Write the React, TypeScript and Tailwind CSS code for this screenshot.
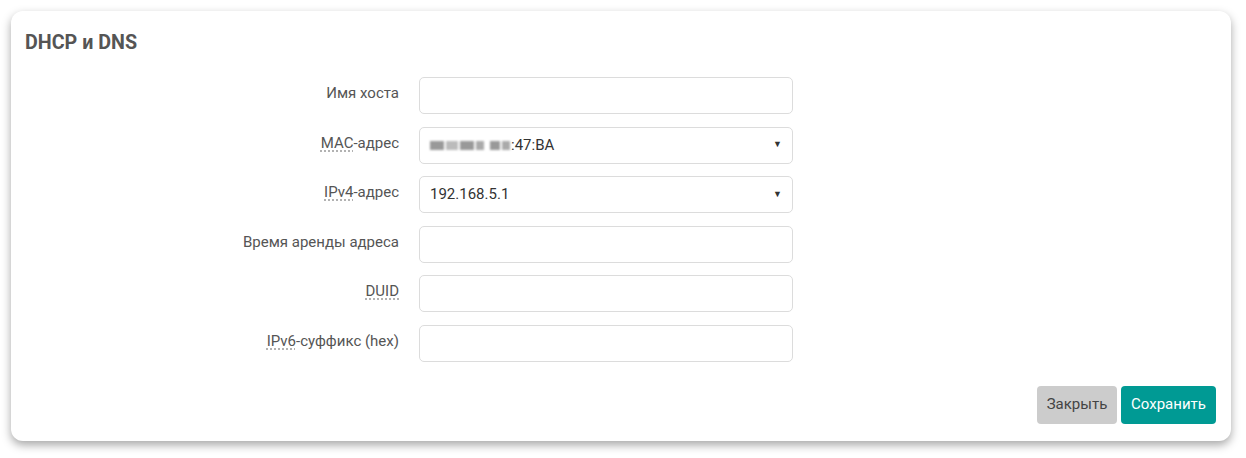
import type { ReactNode } from 'react'

function Abbr({ children }: { children: ReactNode }) {
  return (
    <span className="underline decoration-dotted decoration-[#999] underline-offset-[3px]">
      {children}
    </span>
  )
}

function Row({ label, children }: { label: ReactNode; children: ReactNode }) {
  return (
    <div className="flex items-start">
      <div className="w-[374px] shrink-0 pt-[6px] text-right text-[15px] leading-5 text-[#555]">
        {label}
      </div>
      <div className="ml-[20px] w-[374px]">{children}</div>
    </div>
  )
}

function TextBox() {
  return (
    <div className="h-[37px] w-full rounded-[5px] border border-[#dcdcdc] bg-white" />
  )
}

function SelectBox({ children }: { children: ReactNode }) {
  return (
    <div className="flex h-[37px] w-full items-center rounded-[5px] border border-[#dcdcdc] bg-white pl-[10px] pr-[10px] text-[15px] text-[#333]">
      <div className="flex flex-1 items-center">{children}</div>
      <span className="text-[9px] text-[#333]">▼</span>
    </div>
  )
}

export default function App() {
  return (
    <div className="h-[458px] w-[1246px] bg-white pl-[11px] pt-[11px] font-['Roboto','Liberation_Sans',sans-serif]">
      <div className="flex h-[430px] w-[1220px] flex-col rounded-[12px] bg-white px-[14px] pt-[21px] shadow-[0_4px_10px_rgba(0,0,0,0.35)]">
        <h3 className="text-[19.7px] font-bold leading-[22px] text-[#555]">DHCP и DNS</h3>
        <div className="mt-[23px] flex flex-col gap-[12.5px]">
          <Row label="Имя хоста">
            <TextBox />
          </Row>
          <Row
            label={
              <>
                <Abbr>MAC</Abbr>-адрес
              </>
            }
          >
            <SelectBox>
              <span className="flex items-center gap-[2px] blur-[1.2px]">
                <span className="h-[9px] w-[14px] bg-[#999]" />
                <span className="h-[9px] w-[12px] bg-[#bbb]" />
                <span className="h-[9px] w-[14px] bg-[#999]" />
                <span className="h-[9px] w-[8px] bg-[#aaa]" />
                <span className="ml-[4px] h-[9px] w-[10px] bg-[#999]" />
                <span className="h-[9px] w-[8px] bg-[#aaa]" />
              </span>
              <span className="ml-[1px]">:47:BA</span>
            </SelectBox>
          </Row>
          <Row
            label={
              <>
                <Abbr>IPv4</Abbr>-адрес
              </>
            }
          >
            <SelectBox>192.168.5.1</SelectBox>
          </Row>
          <Row label="Время аренды адреса">
            <TextBox />
          </Row>
          <Row label={<Abbr>DUID</Abbr>}>
            <TextBox />
          </Row>
          <Row
            label={
              <>
                <Abbr>IPv6</Abbr>-суффикс (hex)
              </>
            }
          >
            <TextBox />
          </Row>
        </div>
        <div className="mt-[24px] flex justify-end gap-[4px] pr-[1px]">
          <button className="h-[38px] w-[80px] rounded-[4px] bg-[#cccccc] text-[15px] text-[#444]">
            Закрыть
          </button>
          <button className="h-[38px] w-[95px] rounded-[4px] bg-[#009a94] text-[15px] text-white">
            Сохранить
          </button>
        </div>
      </div>
    </div>
  )
}
